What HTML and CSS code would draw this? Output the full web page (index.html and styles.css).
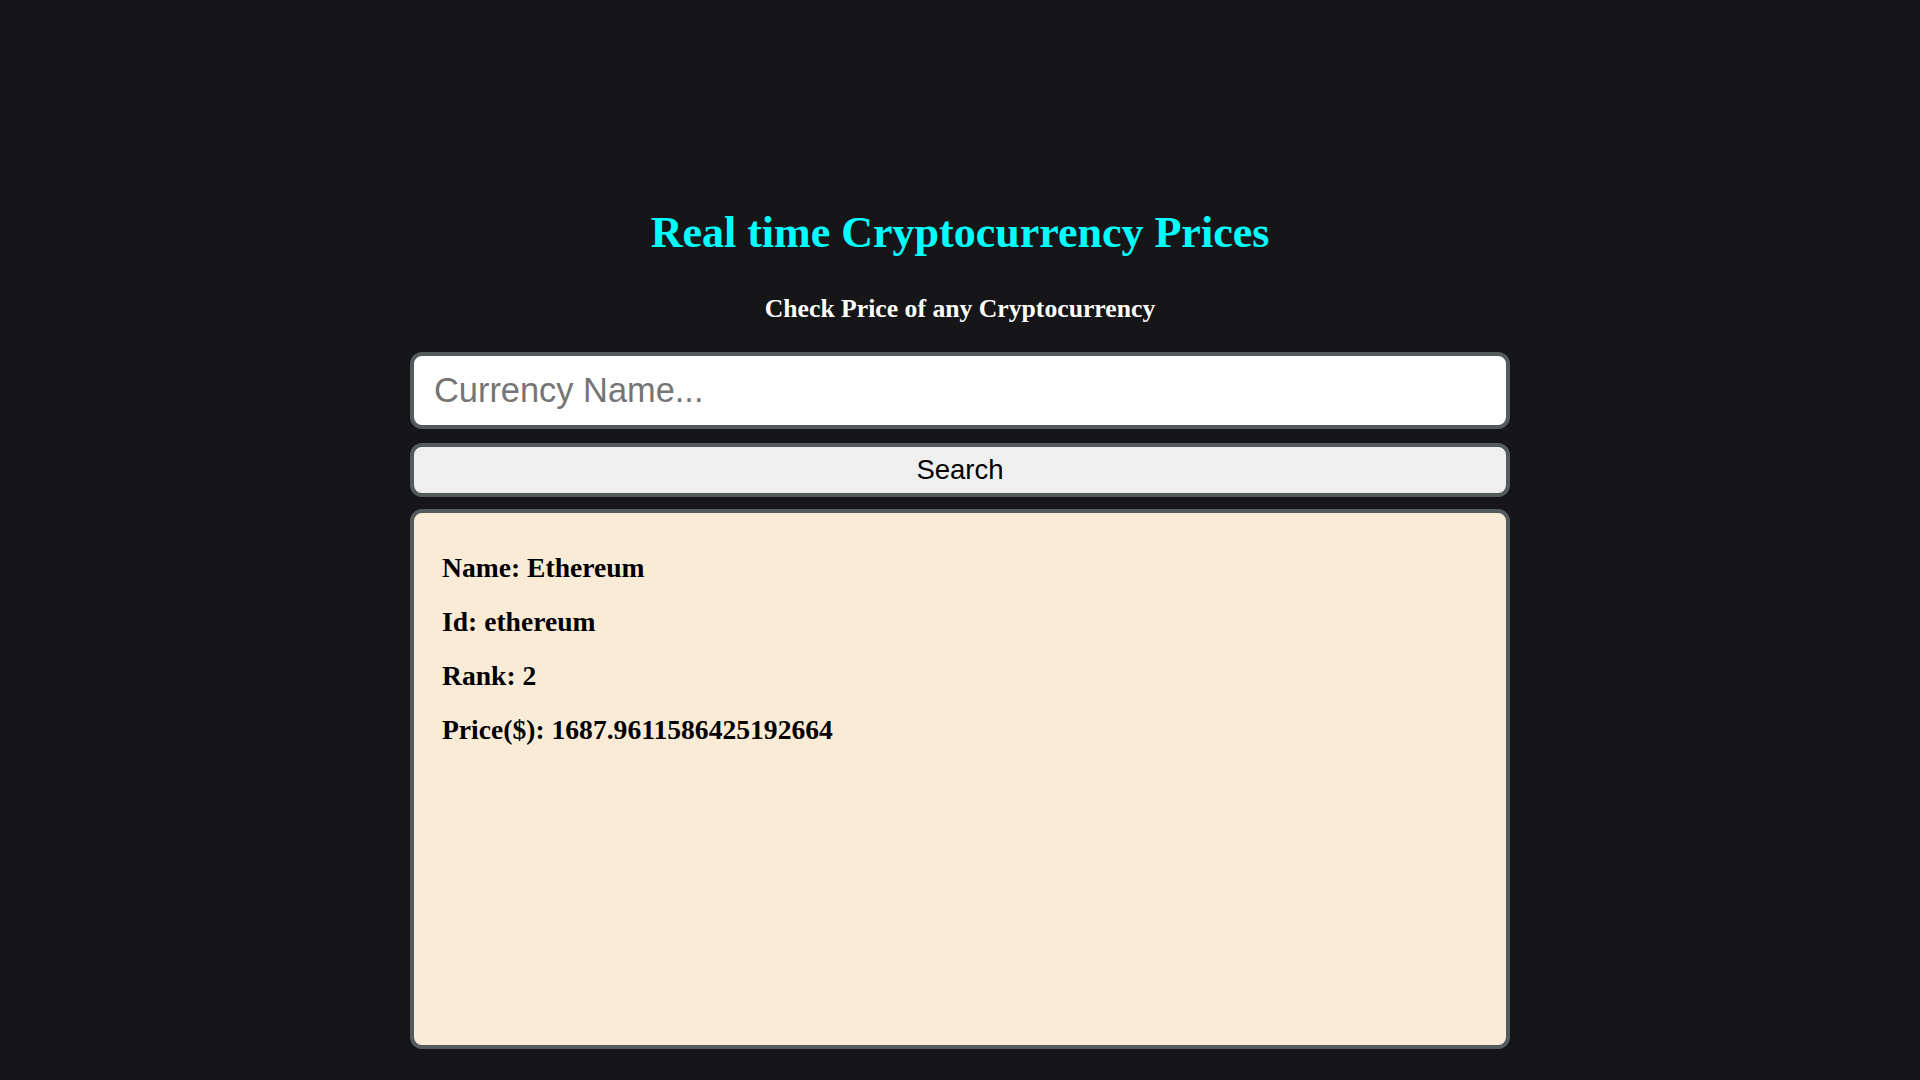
FILE: index.html
```html
<!DOCTYPE html>
<html lang="en">
<head>
<meta charset="utf-8">
<title>Real time Cryptocurrency Prices</title>
<link rel="stylesheet" href="styles.css">
</head>
<body>
<main class="app">
  <h1 class="title">Real time Cryptocurrency Prices</h1>
  <h3 class="subtitle">Check Price of any Cryptocurrency</h3>
  <input class="search-input" type="text" placeholder="Currency Name..." autofocus>
  <button class="search-btn" type="button">Search</button>
  <section class="result">
    <p class="result-line">Name: Ethereum</p>
    <p class="result-line">Id: ethereum</p>
    <p class="result-line">Rank: 2</p>
    <p class="result-line">Price($): 1687.9611586425192664</p>
  </section>
</main>
</body>
</html>
```
FILE: styles.css
```css
html, body {
  margin: 0;
  padding: 0;
  background: #161618;
}

body {
  font-family: "Liberation Serif", "Times New Roman", serif;
}

.app {
  width: 1100px;
  margin: 0 auto;
  padding-top: 208px;
  display: flex;
  flex-direction: column;
  align-items: stretch;
}

.title {
  margin: 0;
  font-size: 44px;
  line-height: 50px;
  font-weight: bold;
  color: #00ffff;
  text-align: center;
}

.subtitle {
  margin: 36px 0 28px;
  font-size: 25.7px;
  line-height: 30px;
  font-weight: bold;
  color: #ffffff;
  text-align: center;
}

.search-input {
  box-sizing: border-box;
  height: 77px;
  border: 4px solid #555a5c;
  border-radius: 12px;
  background: #ffffff;
  padding: 0 20px;
  font-family: "Liberation Sans", Arial, sans-serif;
  font-size: 34.4px;
  color: #000;
  caret-color: #000;
  outline: none;
  margin: 0;
}

.search-input::placeholder {
  color: #757575;
}

.search-btn {
  box-sizing: border-box;
  height: 54px;
  margin-top: 14px;
  border: 4px solid #555a5c;
  border-radius: 12px;
  background: #efefef;
  font-family: "Liberation Sans", Arial, sans-serif;
  font-size: 27.5px;
  color: #000;
  padding: 0;
}

.result {
  box-sizing: border-box;
  height: 540px;
  margin-top: 12px;
  border: 4px solid #555a5c;
  border-radius: 12px;
  background: #faebd7;
  padding: 39px 28px 0;
  display: flex;
  flex-direction: column;
  gap: 22px;
}

.result-line {
  margin: 0;
  font-size: 27.6px;
  line-height: 32px;
  font-weight: bold;
  color: #000;
}
```
